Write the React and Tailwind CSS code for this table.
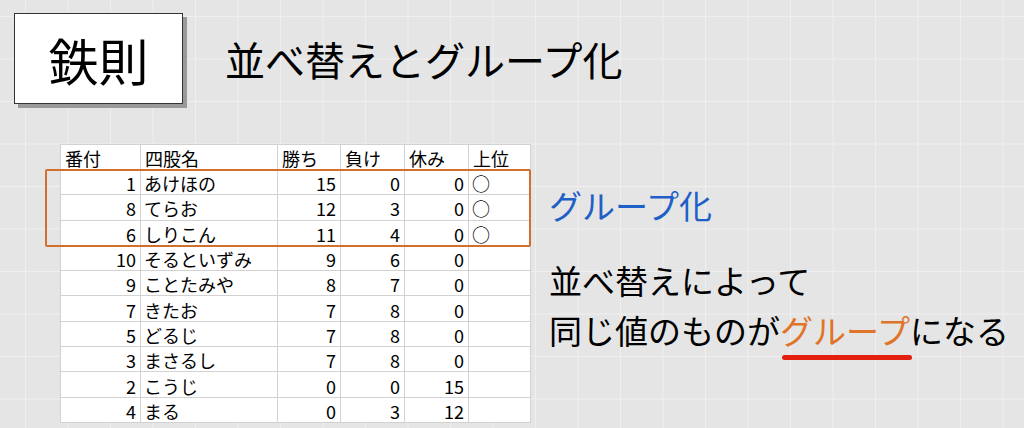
import React from 'react';

const rows = [
  [1, 'あけほの', 15, 0, 0, '○'],
  [8, 'てらお', 12, 3, 0, '○'],
  [6, 'しりこん', 11, 4, 0, '○'],
  [10, 'そるといずみ', 9, 6, 0, ''],
  [9, 'ことたみや', 8, 7, 0, ''],
  [7, 'きたお', 7, 8, 0, ''],
  [5, 'どるじ', 7, 8, 0, ''],
  [3, 'まさるし', 7, 8, 0, ''],
  [2, 'こうじ', 0, 0, 15, ''],
  [4, 'まる', 0, 3, 12, ''],
];

const headers = ['番付', '四股名', '勝ち', '負け', '休み', '上位'];
const widths = ['w-[80px]', 'w-[137px]', 'w-[63px]', 'w-[64px]', 'w-[64px]', 'w-[62px]'];

export default function App() {
  return (
    <div className="w-[1024px] h-[428px] overflow-hidden bg-[#e5e5e5] bg-[linear-gradient(to_right,#efefef_1px,transparent_1px),linear-gradient(to_bottom,#efefef_1px,transparent_1px)] bg-size-[42.5px_42.5px] bg-position-[25px_16px] font-['Noto_Sans_CJK_JP',sans-serif] text-black">
      {/* Title */}
      <div className="flex items-center pl-[14px] pt-[13px]">
        <div className="w-[169px] h-[91px] bg-white border border-[#333] shadow-[4px_4px_0_#9a9a9a] flex items-center justify-center">
          <span className="text-[50px] leading-none">鉄則</span>
        </div>
        <h1 className="ml-[42px] text-[40px] leading-none">並べ替えとグループ化</h1>
      </div>

      <div className="flex pl-[60px] pt-[40px]">
        {/* Table */}
        <div className="relative">
          <table className="border-collapse bg-white text-[18px] leading-none">
            <thead>
              <tr className="h-[25px]">
                {headers.map((h, i) => (
                  <th key={h} className={`${widths[i]} border border-[#d2d2d2] px-[4px] pt-[2px] text-left font-normal`}>{h}</th>
                ))}
              </tr>
            </thead>
            <tbody>
              {rows.map((r) => (
                <tr key={r[0]} className="h-[25.3px]">
                  <td className="border border-[#d2d2d2] px-[4px] pt-[2px] text-right">{r[0]}</td>
                  <td className="border border-[#d2d2d2] px-[3px] pt-[2px] text-left">{r[1]}</td>
                  <td className="border border-[#d2d2d2] px-[4px] pt-[2px] text-right">{r[2]}</td>
                  <td className="border border-[#d2d2d2] px-[4px] pt-[2px] text-right">{r[3]}</td>
                  <td className="border border-[#d2d2d2] px-[4px] pt-[2px] text-right">{r[4]}</td>
                  <td className="border border-[#d2d2d2] px-[3px] pt-[2px] text-left">{r[5]}</td>
                </tr>
              ))}
            </tbody>
          </table>
          {/* group highlight */}
          <div className="absolute left-[-15px] top-[25px] w-[486px] h-[78px] border-2 border-[#d0702c] rounded-[2px] pointer-events-none" />
        </div>

        {/* Explanation */}
        <div className="ml-[18px] flex flex-col">
          <p className="mt-[45px] text-[33px] leading-none text-[#1f5fc8]">グループ化</p>
          <p className="mt-[33px] text-[33px] leading-[50px]">
            並べ替えによって
            <br />
            同じ値のものが
            <span className="relative text-[#e07428]">
              グループ
              <span className="absolute left-[2px] right-[-2px] top-[49px] h-[5px] rounded-full bg-[#e3200f]" />
            </span>
            になる
          </p>
        </div>
      </div>
    </div>
  );
}
